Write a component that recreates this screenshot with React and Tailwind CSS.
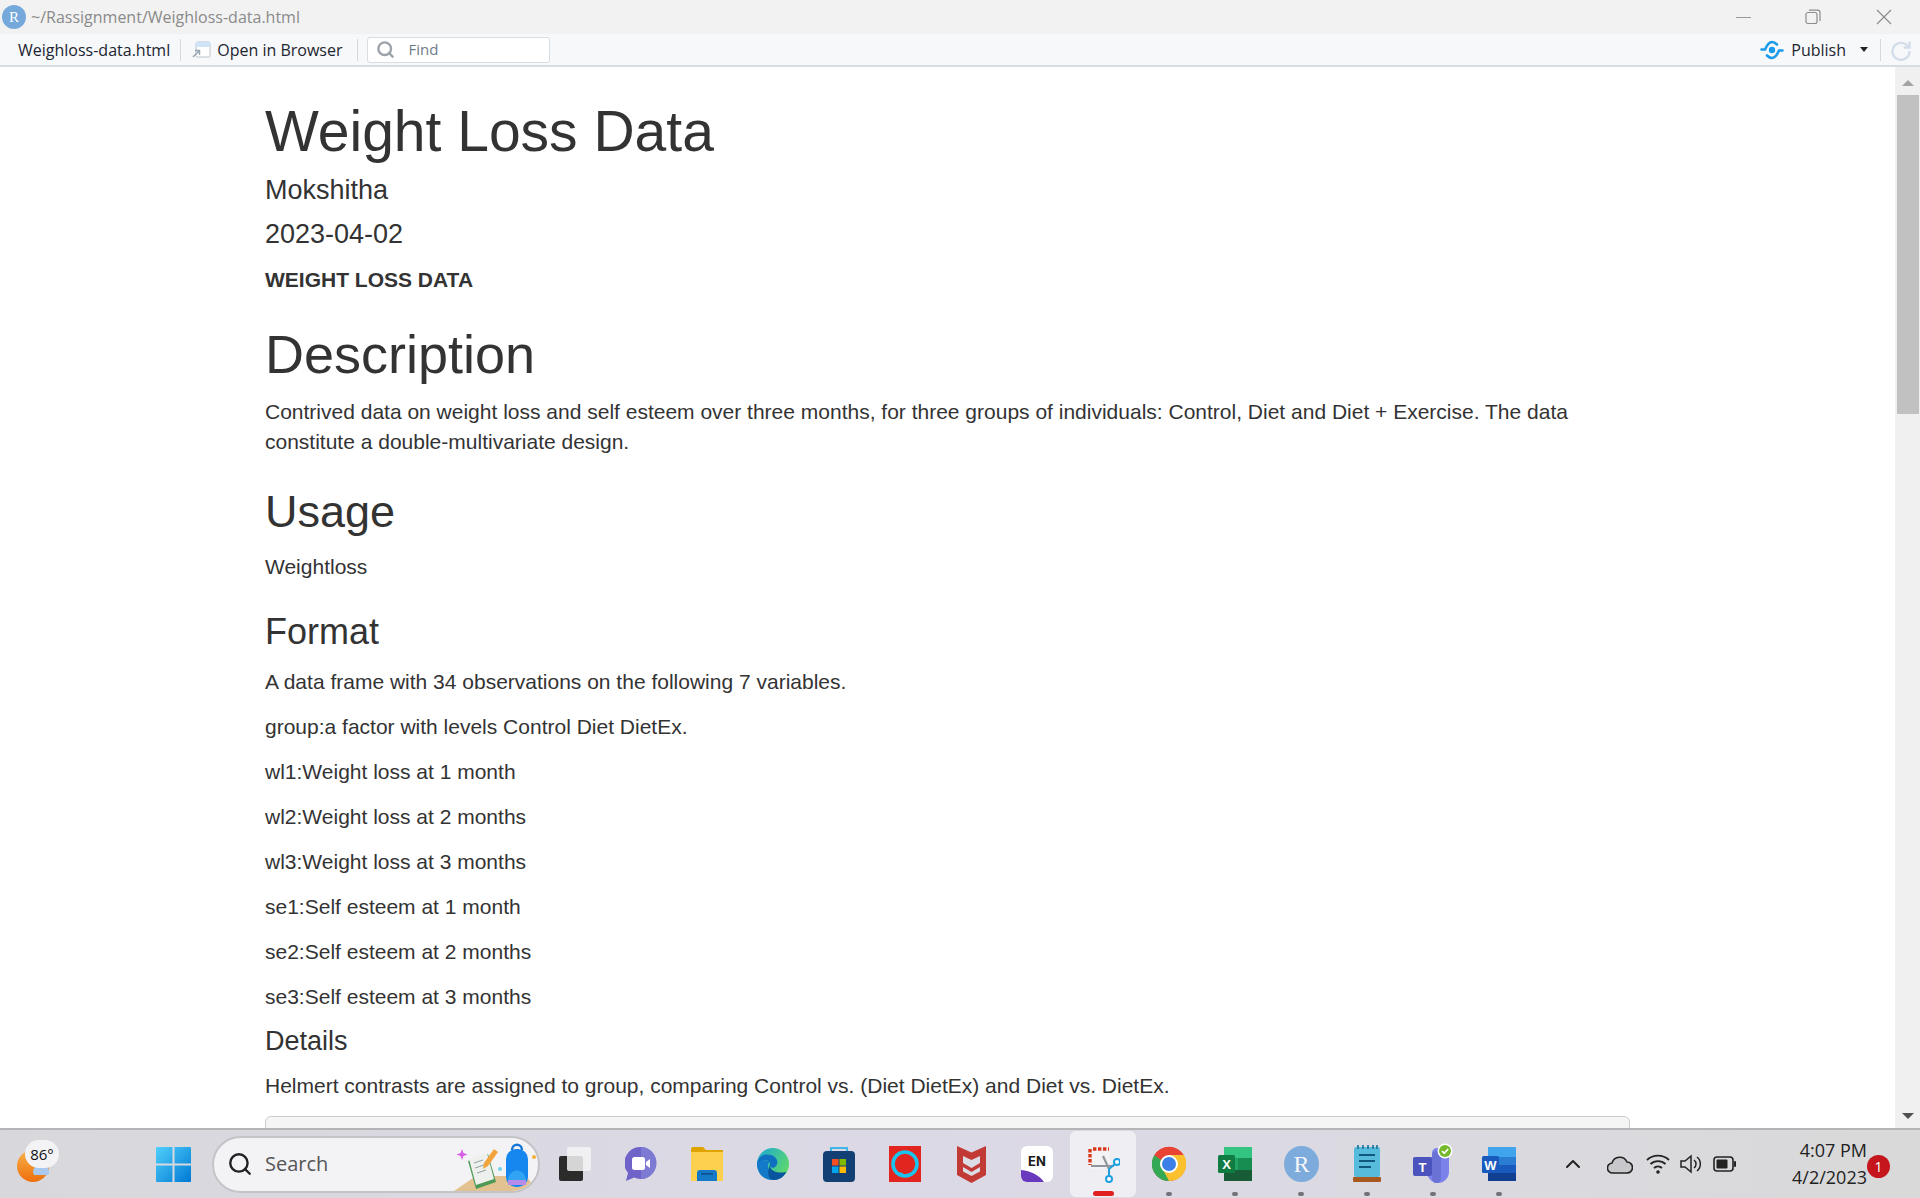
import React from 'react';
import { Search, ChevronUp } from 'lucide-react';

const bodyFont = { fontFamily: '"Liberation Sans", Arial, sans-serif' };

function Sep() {
  return <div className="w-px h-[22px] bg-[#d5d9dd]" />;
}

function RLogo({ size = 24 }) {
  return (
    <svg width={size} height={size} viewBox="0 0 24 24">
      <circle cx="12" cy="12" r="12" fill="#75a9dc" />
      <text x="12" y="17" textAnchor="middle" fontSize="15" fill="#fff" fontFamily="Liberation Serif, serif">R</text>
    </svg>
  );
}

function TitleBar() {
  return (
    <div className="h-[34px] shrink-0 bg-[#f2f2f2] flex items-center pl-[2px]">
      <RLogo size={24} />
      <span className="ml-[5px] text-[16px] text-[#8a8a8a] font-['Open_Sans',sans-serif]">~/Rassignment/Weighloss-data.html</span>
      <div className="ml-auto flex items-center text-[#8c8c8c]">
        {/* window buttons */}
        <div className="w-[70px] flex justify-center"><div className="w-[15px] h-px bg-[#999]" /></div>
        <div className="w-[70px] flex justify-center">
          <svg width="16" height="16" viewBox="0 0 16 16" fill="none" stroke="#8c8c8c" strokeWidth="1.2">
            <rect x="1" y="3.5" width="11" height="11" rx="2" />
            <path d="M4 1.2h8.5a2.5 2.5 0 0 1 2.5 2.5V12" />
          </svg>
        </div>
        <div className="w-[72px] flex justify-center">
          <svg width="16" height="16" viewBox="0 0 16 16" stroke="#8c8c8c" strokeWidth="1.2"><path d="M1 1l14 14M15 1L1 15" /></svg>
        </div>
      </div>
    </div>
  );
}

function Toolbar() {
  return (
    <div className="h-[33px] shrink-0 bg-[#f6f8fa] border-b-2 border-[#d8dcdf] flex items-center text-[16px] text-[#1c2530] font-['Open_Sans',sans-serif]">
      <span className="ml-[18px]">Weighloss-data.html</span>
      <div className="ml-[10px]"><Sep /></div>
      <svg className="ml-[10px]" width="20" height="18" viewBox="0 0 20 18" fill="none">
        <rect x="5" y="1" width="14" height="15" rx="1.5" fill="#fff" stroke="#b9c3cc" />
        <rect x="5" y="1" width="14" height="5" fill="#cfe3f7" />
        <path d="M2 16l6-6M4 9.5h4.5V14" stroke="#9aa7b3" strokeWidth="1.5" />
      </svg>
      <span className="ml-[6px]">Open in Browser</span>
      <div className="ml-[15px]"><Sep /></div>
      <div className="ml-[9px] w-[183px] h-[26px] bg-white border border-[#d8dde2] rounded-[3px] flex items-center pl-[8px] text-[#6f7c88]">
        <Search size={19} strokeWidth={3} className="text-[#9ca3aa]" />
        <span className="ml-[13px] text-[15px]">Find</span>
      </div>
      <div className="ml-auto flex items-center">
        <svg width="24" height="20" viewBox="0 0 24 20" fill="none" stroke="#1b9bea" strokeWidth="2.6" strokeLinecap="round">
          <path d="M1.5 9.5H5C7 5 9 2 12 2c2 0 3.5 1 5 2.5" />
          <path d="M22.5 10.5H19C17 15 15 18 12 18c-2 0-3.5-1-5-2.5" />
          <circle cx="12" cy="10" r="3.2" fill="#1b9bea" stroke="none" />
        </svg>
        <span className="ml-[7px]">Publish</span>
        <div className="ml-[14px] w-0 h-0 border-x-[4px] border-x-transparent border-t-[5px] border-t-[#222]" />
        <div className="ml-[12px]"><Sep /></div>
        <svg className="ml-[9px] mr-[8px]" width="22" height="22" viewBox="0 0 22 22" fill="none" stroke="#d3deea" strokeWidth="2.4">
          <path d="M18 7.5A8.5 8.5 0 1 0 19.5 12" />
          <path d="M19.5 2.5v6h-6" />
        </svg>
      </div>
    </div>
  );
}

const rows = [
  'A data frame with 34 observations on the following 7 variables.',
  'group:a factor with levels Control Diet DietEx.',
  'wl1:Weight loss at 1 month',
  'wl2:Weight loss at 2 months',
  'wl3:Weight loss at 3 months',
  'se1:Self esteem at 1 month',
  'se2:Self esteem at 2 months',
  'se3:Self esteem at 3 months',
];

function Article() {
  return (
    <div style={bodyFont} className="flex-1 min-w-0 overflow-hidden pl-[265px] pr-[265px] text-[21px] leading-[30px] text-[#333]">
      <h1 className="mt-[33px] mb-[13px] text-[57px] leading-[1.1]">Weight Loss Data</h1>
      <h4 className="mb-[15px] text-[27px] leading-[1.1]">Mokshitha</h4>
      <h4 className="mb-[15px] text-[27px] leading-[1.1]">2023-04-02</h4>
      <p className="font-bold">WEIGHT LOSS DATA</p>
      <h1 className="mt-[30px] mb-[13px] text-[54px] leading-[1.1]">Description</h1>
      <p>
        Contrived data on weight loss and self esteem over three months, for three groups of individuals: Control, Diet and Diet + Exercise. The data constitute a double-multivariate design.
      </p>
      <h2 className="mt-[30px] mb-[15px] text-[45px] leading-[1.1]">Usage</h2>
      <p>Weightloss</p>
      <h3 className="mt-[30px] mb-[15px] text-[36px] leading-[1.1]">Format</h3>
      {rows.map((r) => (
        <p key={r} className="mb-[15px]">{r}</p>
      ))}
      <h4 className="mb-[15px] text-[27px] leading-[1.1]">Details</h4>
      <p className="mb-[15px]">Helmert contrasts are assigned to group, comparing Control vs. (Diet DietEx) and Diet vs. DietEx.</p>
      <div className="h-[60px] bg-[#f5f5f5] border border-[#ccc] rounded-[6px]" />
    </div>
  );
}

function Scrollbar() {
  return (
    <div className="w-[25px] shrink-0 bg-[#f0f0f0] flex flex-col items-center">
      <div className="mt-[13px] w-0 h-0 border-x-[6px] border-x-transparent border-b-[6px] border-b-[#a3a3a3]" />
      <div className="mt-[9px] w-[22px] h-[319px] bg-[#c1c1c1]" />
      <div className="mt-auto mb-[9px] w-0 h-0 border-x-[6px] border-x-transparent border-t-[6px] border-t-[#505050]" />
    </div>
  );
}

function Slot({ children, dot, active }) {
  return (
    <div className={`relative w-[66px] h-[66px] shrink-0 flex items-center justify-center rounded-[6px] ${active ? 'bg-[#efeff3]' : ''}`}>
      {children}
      {dot && <div className="absolute bottom-[1px] w-[6px] h-[4px] rounded-full bg-[#73737a]" />}
      {active && <div className="absolute bottom-[1px] w-[21px] h-[5px] rounded-full bg-[#e02020]" />}
    </div>
  );
}

function TaskView() {
  return (
    <svg width="34" height="36" viewBox="0 0 34 36">
      <rect x="1" y="10" width="24" height="25" rx="2" fill="#2b2b2b" />
      <rect x="9" y="1" width="24" height="24" rx="2" fill="#f3f3f5" fillOpacity="0.85" />
    </svg>
  );
}

function MeetIcon() {
  return (
    <svg width="32" height="36" viewBox="0 0 32 36">
      <path d="M16 1a15.5 16 0 1 1-7 30.5L1 35l2-8A16 16 0 0 1 16 1z" fill="#6f62c8" />
      <path d="M16 1a15.5 16 0 0 1 0 32z" fill="#7d7ad4" />
      <rect x="7" y="11" width="13" height="13" rx="2.5" fill="#fff" />
      <path d="M21 16l4-3v9l-4-3z" fill="#fff" />
    </svg>
  );
}

function FolderIcon() {
  return (
    <svg width="32" height="34" viewBox="0 0 32 34">
      <path d="M0 2a2 2 0 0 1 2-2h10l3 3h17v31H0z" fill="#e0a400" />
      <rect x="0" y="5" width="32" height="29" fill="#fdd04f" />
      <path d="M6 34v-8a3 3 0 0 1 3-3h14a3 3 0 0 1 3 3v8z" fill="#1479c9" />
      <rect x="10" y="26" width="12" height="1.6" fill="#0d4f8a" />
    </svg>
  );
}

function EdgeIcon() {
  return (
    <svg width="32" height="36" viewBox="0 0 32 36">
      <defs>
        <linearGradient id="edgeA" x1="0" y1="0" x2="1" y2="0.6">
          <stop offset="0" stopColor="#1aa6d8" />
          <stop offset="1" stopColor="#5cd86c" />
        </linearGradient>
      </defs>
      <circle cx="16" cy="18" r="16" fill="url(#edgeA)" />
      <path d="M0 18C1 10 8 7 14 9c6 2 8 7 5 11-2 3-6 2-6-1 0-6-8-7-11 0z" fill="#0f6fc0" />
      <path d="M0 18c0 10 8 17 17 16 6-1 10-4 12-8-5 3-11 3-15 0-4-3-4-8-1-11-6-2-13 0-13 3z" fill="#1379c9" />
      <path d="M13 19c0 6 7 9 16 7-2 5-7 8-12 8-5 0-8-6-4-15z" fill="#0a559f" />
    </svg>
  );
}

function StoreIcon() {
  return (
    <svg width="32" height="36" viewBox="0 0 32 36">
      <path d="M8 6V2h16v4" fill="none" stroke="#3fb6e8" strokeWidth="2" />
      <rect x="0" y="5" width="32" height="31" rx="4" fill="#123f74" />
      <rect x="9" y="13" width="6.5" height="6.5" fill="#f25022" />
      <rect x="16.5" y="13" width="6.5" height="6.5" fill="#7fba00" />
      <rect x="9" y="20.5" width="6.5" height="6.5" fill="#00a4ef" />
      <rect x="16.5" y="20.5" width="6.5" height="6.5" fill="#ffb900" />
    </svg>
  );
}

function AlexaIcon() {
  return (
    <svg width="32" height="36" viewBox="0 0 32 36">
      <rect width="32" height="36" fill="#e3251f" />
      <circle cx="16" cy="18" r="12" fill="none" stroke="#1bc4ee" strokeWidth="3.6" />
      <path d="M9 30l3-4 3 3z" fill="#1bc4ee" />
    </svg>
  );
}

function McAfeeIcon() {
  return (
    <svg width="29" height="37" viewBox="0 0 29 37">
      <path d="M0 0l14.5 6.5L29 0v29l-14.5 8L0 29z" fill="#c23a36" />
      <path d="M6 10l8.5 4 8.5-4v15.5l-8.5 4.5L6 25.5z" fill="#dcdce4" />
      <path d="M6 17l8.5 5 8.5-5v4l-8.5 5-8.5-5z" fill="#c23a36" />
    </svg>
  );
}

function LangIcon() {
  return (
    <div className="relative w-[32px] h-[36px] bg-white rounded-[6px] overflow-hidden flex items-center justify-center">
      <span className="font-['Inter',sans-serif] font-bold text-[13px] text-[#1a1a1a] -mt-[4px]">EN</span>
      <svg className="absolute left-0 bottom-0" width="32" height="14" viewBox="0 0 32 14">
        <path d="M0 2c10 1 18 5 23 12H0z" fill="#6a38bd" />
      </svg>
    </div>
  );
}

function SnipIcon() {
  return (
    <svg width="34" height="38" viewBox="0 0 34 38" fill="none">
      <rect x="4" y="2" width="20" height="22" fill="#f3f3f5" />
      <path d="M4 4v16M7 4h16" stroke="#d9381e" strokeWidth="3.4" strokeDasharray="3.4 1.6" />
      <path d="M17 11l6 13v5M5 21h17l6 0" stroke="#8f979e" strokeWidth="2.2" />
      <circle cx="31" cy="17" r="3" stroke="#1ea0e0" strokeWidth="2" fill="#fff" />
      <circle cx="23" cy="34" r="3" stroke="#1ea0e0" strokeWidth="2" fill="#fff" />
      <path d="M23 24l6-5M23 24v7" stroke="#1ea0e0" strokeWidth="2" />
    </svg>
  );
}

function ChromeIcon() {
  return (
    <svg width="34" height="36" viewBox="0 0 34 36">
      <circle cx="17" cy="18" r="17" fill="#e94335" />
      <path d="M17 18L2.5 9A17 17 0 0 0 17 35l8-12z" fill="#34a853" />
      <path d="M17 18l-9 0 9 17A17 17 0 0 0 31 8H17z" fill="#fbc02d" />
      <path d="M2.5 9A17 17 0 0 1 31.5 9H17a9 9 0 0 0-8 5z" fill="#e94335" />
      <circle cx="17" cy="18" r="9" fill="#fff" />
      <circle cx="17" cy="18" r="7" fill="#3c7fe8" />
    </svg>
  );
}

function ExcelIcon() {
  return (
    <svg width="34" height="34" viewBox="0 0 34 34">
      <rect x="6" y="0" width="28" height="11" fill="#33c481" />
      <rect x="6" y="11" width="28" height="12" fill="#21a366" />
      <rect x="6" y="23" width="28" height="11" fill="#185c37" />
      <rect x="20" y="11" width="14" height="12" fill="#107c41" fillOpacity="0.55" />
      <rect x="0" y="8" width="17" height="18" rx="1.5" fill="#107c41" />
      <text x="8.5" y="22" textAnchor="middle" fontSize="13" fontWeight="700" fill="#fff" fontFamily="Liberation Sans, sans-serif">X</text>
    </svg>
  );
}

function NotepadIcon() {
  return (
    <svg width="28" height="38" viewBox="0 0 28 38">
      <rect x="1" y="2" width="26" height="30" rx="2" fill="#57bcdc" />
      <path d="M5 0v4M10 0v4M15 0v4M20 0v4M24 0v4" stroke="#1a6f96" strokeWidth="1.6" />
      <path d="M6 10h16M6 16h16M6 22h12" stroke="#11587e" strokeWidth="2" />
      <rect x="0" y="32" width="28" height="5" rx="1" fill="#a85a1e" />
    </svg>
  );
}

function TeamsIcon() {
  return (
    <svg width="42" height="42" viewBox="0 0 42 42">
      <circle cx="25" cy="10" r="5" fill="#7b83eb" />
      <path d="M15 14h22v15c0 6-5 11-11 11s-11-5-11-11z" fill="#7b83eb" />
      <rect x="20" y="8" width="9" height="32" rx="4.5" fill="#6a72d6" />
      <rect x="1" y="14" width="19" height="19" rx="2" fill="#4b53bc" />
      <text x="10.5" y="28.5" textAnchor="middle" fontSize="13" fontWeight="700" fill="#fff" fontFamily="Liberation Sans, sans-serif">T</text>
      <circle cx="33" cy="8" r="7.5" fill="#fff" />
      <circle cx="33" cy="8" r="6" fill="#75b82a" />
      <path d="M30 8l2.2 2.3 4-4.3" fill="none" stroke="#fff" strokeWidth="1.8" />
    </svg>
  );
}

function WordIcon() {
  return (
    <svg width="34" height="34" viewBox="0 0 34 34">
      <rect x="6" y="0" width="28" height="10" fill="#41a5ee" />
      <rect x="6" y="10" width="28" height="8" fill="#2b7cd3" />
      <rect x="6" y="18" width="28" height="8" fill="#185abd" />
      <rect x="6" y="26" width="28" height="8" fill="#103f91" />
      <rect x="0" y="9" width="17" height="17" rx="1.5" fill="#185abd" />
      <text x="8.5" y="22.5" textAnchor="middle" fontSize="13" fontWeight="700" fill="#fff" fontFamily="Liberation Sans, sans-serif">W</text>
    </svg>
  );
}

function WeatherIcon() {
  return (
    <div className="relative w-[40px] h-[44px]">
      <svg className="absolute left-[0] top-[6px]" width="36" height="36" viewBox="0 0 36 36">
        <defs>
          <linearGradient id="sunA" x1="0" y1="0" x2="0" y2="1">
            <stop offset="0" stopColor="#f7b24a" />
            <stop offset="1" stopColor="#ee6f0d" />
          </linearGradient>
        </defs>
        <circle cx="16" cy="18" r="16" fill="url(#sunA)" />
        <path d="M17 27a6 6 0 0 1 3-9 7 7 0 0 1 9 1 5 5 0 0 1 2 8z" fill="#a9c9ee" />
      </svg>
      <div className="absolute left-[8px] top-[-2px] w-[34px] h-[28px] rounded-[14px] bg-[#f3f3f5] flex items-center justify-center text-[15px] text-[#111] font-['Open_Sans',sans-serif]">86°</div>
    </div>
  );
}

function WindowsLogo() {
  return (
    <svg width="35" height="35" viewBox="0 0 35 35">
      <defs>
        <linearGradient id="winA" x1="0" y1="0" x2="1" y2="1">
          <stop offset="0" stopColor="#4fd0fb" />
          <stop offset="1" stopColor="#0078d4" />
        </linearGradient>
      </defs>
      <path d="M0 1a1 1 0 0 1 1-1h15.5v16.5H0zM18.5 0H34a1 1 0 0 1 1 1v15.5H18.5zM0 18.5h16.5V35H1a1 1 0 0 1-1-1zM18.5 18.5H35V34a1 1 0 0 1-1 1H18.5z" fill="url(#winA)" />
    </svg>
  );
}

function SearchArt() {
  return (
    <svg width="84" height="50" viewBox="0 0 84 50" fill="none">
      <path d="M8 8l1.5 4 4 1.5-4 1.500L8 19l-1.500-4-4-1.500 4-1.500z" fill="#d860e6" />
      <path d="M0 50l22-15h50l12 15z" fill="#e2c290" />
      <path d="M14 20l20-7 8 28-20 7z" fill="#4c9a56" />
      <path d="M15 18l18-6 7 26-18 6z" fill="#eef0ee" />
      <path d="M20 22l9-3M21 27l9-3M23 32l9-3" stroke="#9aa" strokeWidth="1.2" />
      <path d="M30 22l10-14 4 3-10 14-5 3z" fill="#f2a33a" />
      <rect x="52" y="8" width="22" height="38" rx="10" fill="#1687ee" />
      <path d="M58 9c0-7 10-7 10 0" stroke="#1377d8" strokeWidth="2.500" />
      <path d="M54 40c0-14 18-14 18 0v2H54z" fill="#31a4f3" />
      <rect x="54" y="39" width="18" height="5" fill="#b78ce8" />
      <circle cx="80" cy="16" r="2" fill="#f5b13c" />
      <circle cx="46" cy="28" r="2" fill="#6fd4e8" />
    </svg>
  );
}

function Taskbar() {
  return (
    <div className="relative h-[70px] shrink-0 border-t-[2px] border-[#b5b5b8] bg-gradient-to-r from-[#d8d8dc] via-[#dcd9e6] to-[#d9d9d9] flex items-center font-['Open_Sans',sans-serif]">
      <div className="ml-[17px]"><WeatherIcon /></div>
      <div className="ml-[99px]"><WindowsLogo /></div>
      <div className="ml-[21px] w-[328px] h-[57px] rounded-full bg-[#f3f2f5] border-[2px] border-[#c4c4c8] flex items-center pl-[13px] overflow-hidden">
        <Search size={26} strokeWidth={2.2} className="text-[#222]" />
        <span className="ml-[12px] text-[20px] text-[#555]">Search</span>
        <div className="ml-auto self-end"><SearchArt /></div>
      </div>
      <div className="ml-[2px] flex items-center">
        <Slot><TaskView /></Slot>
        <Slot><MeetIcon /></Slot>
        <Slot><FolderIcon /></Slot>
        <Slot><EdgeIcon /></Slot>
        <Slot><StoreIcon /></Slot>
        <Slot><AlexaIcon /></Slot>
        <Slot><McAfeeIcon /></Slot>
        <Slot><LangIcon /></Slot>
        <Slot active><SnipIcon /></Slot>
        <Slot dot><ChromeIcon /></Slot>
        <Slot dot><ExcelIcon /></Slot>
        <Slot dot><RLogoTall /></Slot>
        <Slot dot><NotepadIcon /></Slot>
        <Slot dot><TeamsIcon /></Slot>
        <Slot dot><WordIcon /></Slot>
      </div>
      <div className="ml-[29px] flex items-center text-[#222]">
        <ChevronUp size={24} strokeWidth={2} />
        <svg className="ml-[22px]" width="26" height="22" viewBox="0 0 26 22" fill="#c8c8cc" stroke="#222" strokeWidth="1.6">
          <path d="M6 20a5 5 0 0 1-1-10 8 8 0 0 1 15-1 5.500 5.500 0 0 1 0 11z" />
        </svg>
        <svg className="ml-[13px]" width="24" height="22" viewBox="0 0 24 22" fill="none" stroke="#222" strokeWidth="1.8">
          <path d="M1 7a16 16 0 0 1 22 0M4.500 11a11 11 0 0 1 15 0M8 15a6 6 0 0 1 8 0" />
          <circle cx="12" cy="19" r="1.800" fill="#222" stroke="none" />
        </svg>
        <svg className="ml-[9px]" width="24" height="24" viewBox="0 0 24 24" fill="none" stroke="#222" strokeWidth="1.5">
          <path d="M2 9v6h4l6 5V4L6 9z" />
          <path d="M15 8a5 5 0 0 1 0 8M18 5a9 9 0 0 1 0 14" />
        </svg>
        <svg className="ml-[10px]" width="24" height="16" viewBox="0 0 24 16">
          <rect x="1" y="1" width="19" height="14" rx="3" fill="none" stroke="#222" strokeWidth="1.600" />
          <rect x="3.500" y="3.500" width="11" height="9" rx="1" fill="#222" />
          <rect x="21" y="5" width="2" height="6" rx="1" fill="#222" />
        </svg>
      </div>
      <div className="ml-auto mr-[53px] text-right text-[18px] leading-[27px] text-[#222]">
        <div>4:07 PM</div>
        <div>4/2/2023</div>
      </div>
      <div className="absolute right-[30px] top-[25px] w-[23px] h-[23px] rounded-full bg-[#c4161c] text-white text-[14px] flex items-center justify-center">1</div>
    </div>
  );
}

function RLogoTall() {
  return (
    <svg width="35" height="36" viewBox="0 0 35 36">
      <ellipse cx="17.500" cy="18" rx="17.500" ry="18" fill="#7dabdc" />
      <text x="17.500" y="26" textAnchor="middle" fontSize="24" fill="#f4f6fa" fontFamily="Liberation Serif, serif">R</text>
    </svg>
  );
}

export default function App() {
  return (
    <div className="h-[1198px] w-[1920px] flex flex-col overflow-hidden bg-white">
      <TitleBar />
      <Toolbar />
      <div className="flex-1 min-h-0 flex">
        <Article />
        <Scrollbar />
      </div>
      <Taskbar />
    </div>
  );
}
